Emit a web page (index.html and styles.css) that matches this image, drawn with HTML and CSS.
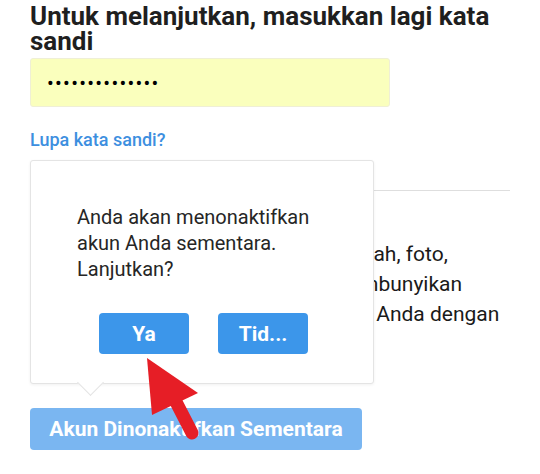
FILE: index.html
```html
<!DOCTYPE html>
<html lang="id">
<head>
  <meta charset="UTF-8" />
  <title>Nonaktifkan Akun</title>
  <meta name="viewport" content="width=device-width, initial-scale=1.0" />
  <link rel="stylesheet" href="styles.css">
</head>
<body>

  <div class="page">
    <h1>Untuk melanjutkan, masukkan lagi kata sandi</h1>

    <input class="password" type="password" value="rahasia1234567" />

    <a class="forgot" href="#">Lupa kata sandi?</a>

    <div class="info">
      <p>Profil, foto profil, kiriman, catatan, kisah, foto,<br>
      komentar, dan suka Anda akan disembunyikan<br>
      hingga Anda masuk kembali ke akun Anda dengan</p>
    </div>

    <button class="btn btn-disabled">Akun Dinonaktifkan Sementara</button>
  </div>

  <div class="popover">
    <p>Anda akan menonaktifkan<br>akun Anda sementara.<br>Lanjutkan?</p>
    <div class="popover-actions">
      <button class="btn btn-small">Ya</button>
      <button class="btn btn-small">Tid...</button>
    </div>
  </div>

  <svg class="pointer" width="540" height="474" viewBox="0 0 540 474">
    <line x1="174" y1="398" x2="192" y2="433" stroke="#e61e26" stroke-width="13" stroke-linecap="round" />
    <polygon points="147,358 198,393 152,415" fill="#e61e26" />
  </svg>

</body>
</html>
```

FILE: styles.css
```css
body {
  margin: 0;
  font-family: Roboto, "Noto Sans", sans-serif;
  color: #222;
  background: #fff;
  position: relative;
  width: 540px;
  height: 474px;
  overflow: hidden;
}

.page {
  padding: 4px 0 0 30px;
}

h1 {
  margin: 0;
  font-size: 26px;
  line-height: 25px;
  font-weight: 700;
  color: #1f1f1f;
  width: 480px;
}

.password {
  display: block;
  box-sizing: border-box;
  width: 360px;
  height: 49px;
  margin-top: 4px;
  padding: 0 16px;
  background: #faffbd;
  border: 1px solid #efefd6;
  border-radius: 3px;
  font-family: Roboto, sans-serif;
  font-size: 20px;
  letter-spacing: 1.3px;
  color: #000;
  outline: none;
}

.forgot {
  display: block;
  margin-top: 20px;
  font-size: 18px;
  line-height: 26px;
  font-weight: 500;
  color: #3d8fdf;
  text-decoration: none;
}

.info {
  width: 480px;
  margin-top: 37px;
  border-top: 1px solid #dedede;
}

.info p {
  margin: 48px 0 0;
  font-size: 21px;
  line-height: 30px;
  color: #1a1a1a;
  white-space: nowrap;
}

.btn {
  border: none;
  border-radius: 4px;
  color: #fff;
  font-family: Roboto, sans-serif;
  font-weight: 700;
  font-size: 21px;
  cursor: pointer;
}

.btn-disabled {
  display: block;
  width: 332px;
  height: 42px;
  margin-top: 79px;
  background: #7ab6f1;
}

.popover {
  position: absolute;
  left: 30px;
  top: 160px;
  box-sizing: border-box;
  width: 344px;
  height: 224px;
  padding: 43px 0 0 46px;
  background: #fff;
  border: 1px solid #e4e4e4;
  border-radius: 3px;
  box-shadow: 0 1px 3px rgba(0, 0, 0, 0.06);
}

.popover::after {
  content: "";
  position: absolute;
  left: 50px;
  bottom: -9px;
  width: 18px;
  height: 18px;
  background: #fff;
  border-right: 1px solid #e4e4e4;
  border-bottom: 1px solid #e4e4e4;
  transform: rotate(45deg);
}

.popover p {
  margin: 0;
  font-size: 20px;
  line-height: 26px;
  color: #262626;
}

.popover-actions {
  display: flex;
  gap: 29px;
  margin: 31px 0 0 22px;
}

.btn-small {
  width: 90px;
  height: 41px;
  background: #3c96ea;
}

.pointer {
  position: absolute;
  left: 0;
  top: 0;
}
```
